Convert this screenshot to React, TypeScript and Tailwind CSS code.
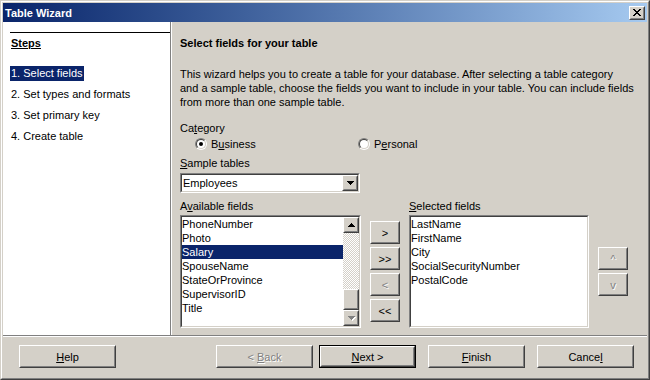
import React from 'react'

const STEPS = ['1. Select fields', '2. Set types and formats', '3. Set primary key', '4. Create table']
const AVAILABLE = ['PhoneNumber', 'Photo', 'Salary', 'SpouseName', 'StateOrProvince', 'SupervisorID', 'Title']
const SELECTED = ['LastName', 'FirstName', 'City', 'SocialSecurityNumber', 'PostalCode']

// pixel glyphs, one string per row
function Pixels({ rows, color }: { rows: string[]; color: string }) {
  return (
    <svg width={rows[0].length} height={rows.length} shapeRendering="crispEdges">
      {rows.map((r, y) =>
        r.split('').map((c, x) => (c === 'X' ? <rect key={`${x}-${y}`} x={x} y={y} width={1} height={1} fill={color} /> : null))
      )}
    </svg>
  )
}

const UP = ['...X...', '..XXX..', '.XXXXX.', 'XXXXXXX']
const DOWN = ['XXXXXXX', '.XXXXX.', '..XXX..', '...X...']
const CLOSE = ['XX....XX', '.XX..XX.', '..XXXX..', '...XX...', '..XXXX..', '.XX..XX.', 'XX....XX']

function Raised({ children, className = '' }: { children?: React.ReactNode; className?: string }) {
  return (
    <div className={`border border-t-white border-l-white border-r-[#404040] border-b-[#404040] bg-[#d4d0c8] ${className}`}>
      <div className="w-full h-full border border-t-[#d4d0c8] border-l-[#d4d0c8] border-r-[#808080] border-b-[#808080] flex items-center justify-center">
        {children}
      </div>
    </div>
  )
}

function Sunken({ children, className = '' }: { children?: React.ReactNode; className?: string }) {
  return (
    <div className={`border border-t-[#808080] border-l-[#808080] border-r-white border-b-white ${className}`}>
      <div className="w-full h-full border border-t-[#404040] border-l-[#404040] border-r-[#d4d0c8] border-b-[#d4d0c8] bg-white flex overflow-hidden">
        {children}
      </div>
    </div>
  )
}

function Radio({ checked }: { checked?: boolean }) {
  return (
    <div className="w-[12px] h-[12px] rounded-full border border-t-[#808080] border-l-[#808080] border-r-white border-b-white">
      <div className="w-full h-full rounded-full border border-t-[#404040] border-l-[#404040] border-r-[#d4d0c8] border-b-[#d4d0c8] bg-white flex items-center justify-center">
        {checked && <div className="w-[4px] h-[4px] rounded-full bg-black" />}
      </div>
    </div>
  )
}

const u = (s: string) => <span className="underline underline-offset-[1px]">{s}</span>
const DIS = 'text-[#808080] [text-shadow:1px_1px_0_#fff]'

export default function App() {
  return (
    <div className="w-[650px] h-[380px] bg-[#d4d0c8] border border-t-[#d4d0c8] border-l-[#d4d0c8] border-r-[#404040] border-b-[#404040] font-['Liberation_Sans',Arial,sans-serif] text-[11px] leading-[14px] text-black">
      <div className="h-full border border-t-white border-l-white border-r-[#808080] border-b-[#808080] p-px flex flex-col">
        {/* title bar */}
        <div className="h-[19px] shrink-0 flex items-center justify-between pl-[2px] pr-[2px] bg-linear-to-r from-[#0a246a] to-[#a6caf0]">
          <span className="font-bold text-white">Table Wizard</span>
          <Raised className="w-[16px] h-[14px]">
            <Pixels rows={CLOSE} color="#000" />
          </Raised>
        </div>

        {/* body */}
        <div className="h-[313px] shrink-0 flex">
          <div className="w-[167px] bg-white flex flex-col">
            <div className="mt-[10px] ml-[7px] h-px bg-black" />
            <div className="mt-[3px] ml-[8px] font-bold underline underline-offset-[1px]">Steps</div>
            <div className="mt-[16px] ml-[7px] flex flex-col gap-[6px] items-start">
              {STEPS.map((s, i) => (
                <div key={s} className={`h-[15px] leading-[15px] px-px ${i === 0 ? 'bg-[#0a246a] text-white' : ''}`}>
                  {s}
                </div>
              ))}
            </div>
          </div>
          <div className="w-[2px] border-l border-l-[#808080] border-r border-r-white" />

          <div className="flex-1 pl-[8px] pt-[14px] flex flex-col">
            <div className="font-bold">Select fields for your table</div>
            <p className="mt-[17px]">
              This wizard helps you to create a table for your database. After selecting a table category
              <br />
              and a sample table, choose the fields you want to include in your table. You can include fields
              <br />
              from more than one sample table.
            </p>

            <div className="mt-[12px]">Ca{u('t')}egory</div>
            <div className="mt-[2px] h-[14px] ml-[15px] flex items-center">
              <div className="w-[163px] flex items-center gap-[4px]">
                <Radio checked />
                <span>B{u('u')}siness</span>
              </div>
              <div className="flex items-center gap-[4px]">
                <Radio />
                <span>P{u('e')}rsonal</span>
              </div>
            </div>

            <div className="mt-[5px]">{u('S')}ample tables</div>
            <Sunken className="mt-[3px] w-[180px] h-[20px]">
              <div className="flex-1 pl-px leading-[16px]">Employees</div>
              <Raised className="w-[16px] h-[16px]">
                <Pixels rows={DOWN} color="#000" />
              </Raised>
            </Sunken>

            <div className="mt-[6px] flex items-start">
              <div className="flex flex-col">
                <div>A{u('v')}ailable fields</div>
                <Sunken className="mt-[2px] w-[181px] h-[113px]">
                  <div className="flex-1 flex flex-col">
                    {AVAILABLE.map(f => (
                      <div key={f} className={`h-[14px] leading-[14px] ${f === 'Salary' ? 'bg-[#0a246a] text-white' : ''}`}>
                        {f}
                      </div>
                    ))}
                  </div>
                  <div className="w-[16px] flex flex-col">
                    <Raised className="h-[16px] shrink-0">
                      <Pixels rows={UP} color="#000" />
                    </Raised>
                    <div className="h-[56px] bg-[repeating-conic-gradient(#d4d0c8_0_25%,#ffffff_0_50%)] [background-size:2px_2px]" />
                    <Raised className="h-[21px] shrink-0" />
                    <Raised className="h-[16px] shrink-0">
                      <div className="relative">
                        <div className="absolute left-px top-px">
                          <Pixels rows={DOWN} color="#fff" />
                        </div>
                        <div className="relative">
                          <Pixels rows={DOWN} color="#808080" />
                        </div>
                      </div>
                    </Raised>
                  </div>
                </Sunken>
              </div>

              <div className="ml-[9px] w-[30px] pt-[22px] flex flex-col gap-[3px]">
                <Raised className="h-[23px]">&gt;</Raised>
                <Raised className="h-[23px]">&gt;&gt;</Raised>
                <Raised className="h-[23px]"><span className={DIS}>&lt;</span></Raised>
                <Raised className="h-[23px]">&lt;&lt;</Raised>
              </div>

              <div className="ml-[9px] flex flex-col">
                <div>{u('S')}elected fields</div>
                <Sunken className="mt-[2px] w-[180px] h-[113px]">
                  <div className="flex-1 flex flex-col">
                    {SELECTED.map(f => (
                      <div key={f} className="h-[14px] leading-[14px]">{f}</div>
                    ))}
                  </div>
                </Sunken>
              </div>

              <div className="ml-[9px] w-[30px] pt-[48px] flex flex-col gap-[3px]">
                <Raised className="h-[23px]"><span className={DIS}>^</span></Raised>
                <Raised className="h-[23px]"><span className={DIS}>v</span></Raised>
              </div>
            </div>
          </div>
        </div>

        <div className="h-[2px] shrink-0 border-t border-t-[#808080] border-b border-b-white" />

        {/* footer */}
        <div className="flex-1 pt-[8px] flex items-start">
          <Raised className="ml-[16px] w-[97px] h-[23px]">{u('H')}elp</Raised>
          <Raised className="ml-[100px] w-[97px] h-[23px]">
            <span className={DIS}>&lt; {u('B')}ack</span>
          </Raised>
          <div className="ml-[6px] w-[97px] h-[23px] border border-black">
            <Raised className="w-full h-full">{u('N')}ext &gt;</Raised>
          </div>
          <Raised className="ml-[12px] w-[97px] h-[23px]">{u('F')}inish</Raised>
          <Raised className="ml-[12px] w-[97px] h-[23px]">Cance{u('l')}</Raised>
        </div>
      </div>
    </div>
  )
}
